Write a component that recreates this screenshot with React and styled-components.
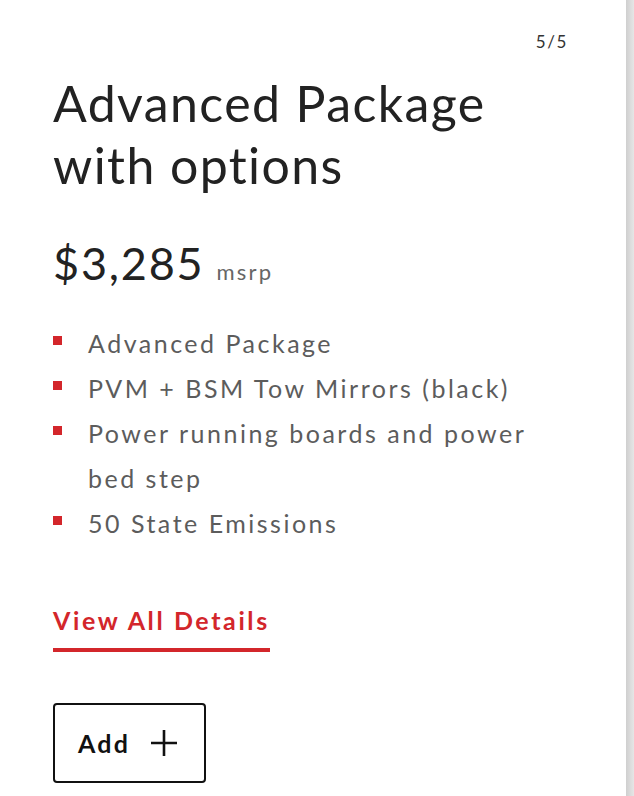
import React from 'react';
import styled, { createGlobalStyle } from 'styled-components';

const GlobalStyle = createGlobalStyle`
  html, body {
    margin: 0;
    padding: 0;
    background: #fff;
  }
  body {
    font-family: Lato, "Noto Sans", sans-serif;
    -webkit-font-smoothing: antialiased;
  }
`;

const Page = styled.div`
  display: flex;
  width: 634px;
  height: 796px;
  overflow: hidden;
`;

const Card = styled.section`
  flex: 1;
  display: flex;
  flex-direction: column;
  align-items: flex-start;
  padding: 30px 58px 0 53px;
`;

const Edge = styled.div`
  width: 8px;
  background: linear-gradient(to right, #cfcfcf, #e6e6e6);
`;

const Counter = styled.div`
  align-self: flex-end;
  font-size: 17px;
  line-height: 24px;
  color: #333;
  letter-spacing: 1.6px;
`;

const Title = styled.h1`
  margin: 18px 0 0;
  font-size: 50px;
  line-height: 62px;
  font-weight: 400;
  letter-spacing: 1.4px;
  color: #222;
`;

const Price = styled.div`
  display: flex;
  align-items: baseline;
  gap: 12px;
  margin-top: 42px;
`;

const Amount = styled.span`
  font-size: 45px;
  line-height: 50px;
  letter-spacing: 1.8px;
  color: #222;
`;

const Unit = styled.span`
  font-size: 22px;
  letter-spacing: 2.2px;
  color: #666;
`;

const Features = styled.ul`
  list-style: none;
  margin: 33px 0 0;
  padding: 0;
`;

const Feature = styled.li`
  position: relative;
  padding-left: 35px;
  font-size: 25px;
  line-height: 45px;
  letter-spacing: 2.5px;
  color: #5c5c5c;

  &::before {
    content: '';
    position: absolute;
    left: 0;
    top: 15px;
    width: 9px;
    height: 9px;
    background: #d3262b;
  }
`;

const DetailsLink = styled.a`
  margin-top: 58px;
  padding-bottom: 12px;
  border-bottom: 4px solid #d3262b;
  font-size: 25px;
  line-height: 32px;
  font-weight: 700;
  letter-spacing: 2.6px;
  color: #d3262b;
  text-decoration: none;
`;

const AddButton = styled.button`
  display: flex;
  align-items: center;
  gap: 20px;
  margin-top: 51px;
  width: 153px;
  height: 80px;
  padding: 0 0 0 23px;
  border: 2px solid #111;
  border-radius: 4px;
  background: #fff;
  font-family: Lato, "Noto Sans", sans-serif;
  font-size: 25px;
  font-weight: 700;
  letter-spacing: 2.2px;
  color: #111;
`;

const PlusIcon = () => (
  <svg width="28" height="28" viewBox="0 0 28 28" fill="none" stroke="#111" strokeWidth="2.6">
    <path d="M14 1v26M1 14h26" />
  </svg>
);

const features = [
  'Advanced Package',
  'PVM + BSM Tow Mirrors (black)',
  'Power running boards and power bed step',
  '50 State Emissions',
];

export default function App() {
  return (
    <Page>
      <GlobalStyle />
      <Card>
        <Counter>5/5</Counter>
        <Title>Advanced Package<br />with options</Title>
        <Price>
          <Amount>$3,285</Amount>
          <Unit>msrp</Unit>
        </Price>
        <Features>
          {features.map((f) => (
            <Feature key={f}>{f}</Feature>
          ))}
        </Features>
        <DetailsLink href="#0">View All Details</DetailsLink>
        <AddButton>
          Add
          <PlusIcon />
        </AddButton>
      </Card>
      <Edge />
    </Page>
  );
}
